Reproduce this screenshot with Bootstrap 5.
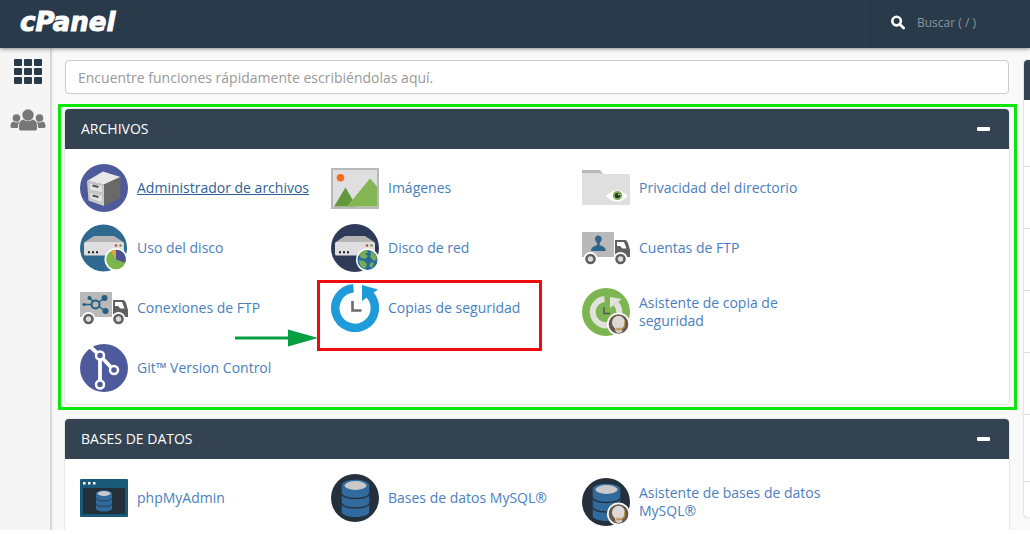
<!DOCTYPE html>
<html lang="es">
<head>
<meta charset="utf-8">
<meta name="viewport" content="width=device-width, initial-scale=1">
<title>cPanel</title>
<link rel="stylesheet" href="https://cdn.jsdelivr.net/npm/bootstrap@5.3.0/dist/css/bootstrap.min.css">
<style>
  body { font-family: "Open Sans", "Noto Sans", sans-serif; font-size: 14px; line-height: 18px; background: #fff; }
  .shell { background: #f9f9f9; border-bottom: 4px solid #fff; }
  .topbar { background: #293a4a; height: 48px; box-shadow: 0 1px 4px rgba(0,0,0,.45); z-index: 3; }
  .brand { font: italic bold 26px/28px "DejaVu Sans", sans-serif; -webkit-text-stroke: 1px #fff; }
  .top-search { width: 160px; border-left: 1px solid #253443; padding-bottom: 3px; }
  .top-search input { font-size: 12px; color: #fff; width: 100px; outline: 0; }
  .top-search input::placeholder { color: #8c959d; opacity: 1; }
  .side { width: 50px; padding: 11px 0 0 6px; background: #f5f5f5; box-shadow: 1px 0 3px rgba(0,0,0,.25); }
  .content { padding: 12px 0 0 15px; }
  .finder { height: 34px; border: 1px solid #ccc; border-radius: 4px; padding: 0 12px; font-size: 14px; }
  .finder::placeholder { color: #999; opacity: 1; }
  .panel-box { margin-top: 15px; border-radius: 4px; background: #fff; box-shadow: 0 0 2px rgba(0,0,0,.25); }
  .panel-title { background: #344352; height: 40px; padding: 0 16px; border-radius: 4px 4px 0 0; font-size: 14px; line-height: 18px; color: #fff; }
  .toggle { width: 20px; height: 20px; }
  .tools { display: grid; grid-template-columns: repeat(auto-fill, 251px); grid-auto-rows: 60px; align-items: start; padding: 15px 0 0 15px; }
  .tool { position: relative; }
  .tool a { display: flex; align-items: center; gap: 9px; min-height: 48px; padding: 10px 10px 10px 0; color: #4a80be; text-decoration: none; }
  .tool a:hover, .tool a.active { color: #2f5f94; text-decoration: underline; }
  .tool svg.ico { width: 48px; height: 48px; flex: none; margin: -10px 0; }
  .frame-green { position: absolute; inset: -5px -8px -6px -7px; border: 3px solid #0be60b; pointer-events: none; }
  .frame-red { position: absolute; left: -14px; top: -4px; width: 225px; height: 71px; border: 3px solid #ed0b0b; pointer-events: none; }
  .arrow { position: absolute; left: -96px; top: 45px; pointer-events: none; }
  .stats { width: 6px; margin: 12px 0 0 15px; }
  .stats-box { border-radius: 4px 0 0 4px; background: #fff; box-shadow: 0 0 2px rgba(0,0,0,.3); overflow: hidden; }
  .stats-title { height: 40px; background: #344352; }
  .stats-row { height: 62px; border-bottom: 1px solid #ddd; }
  .stats-row.tall { height: 67px; }
  .stats-row:last-child { height: 35px; border: 0; }
</style>
</head>
<body>
<svg class="d-none" aria-hidden="true">
  <symbol id="server" viewBox="0 0 48 48">
    <path fill="#b5b5b5" d="M4 18.500 14 12h20l10 6.500z"/>
    <rect x="4" y="18" width="40" height="13.500" rx="1.500" fill="#dedede"/>
    <path fill="#222" d="M8 27.300h2v2H8zm4 0h2v2h-2zm4 0h2v2h-2z"/>
    <circle cx="36" cy="21.500" r="1.200" fill="#c8402e"/><circle cx="40.500" cy="21.500" r="1.200" fill="#5e9a35"/>
  </symbol>
  <symbol id="truck" viewBox="0 0 48 48">
    <path fill="#b9b9b9" d="M0 8h32v25H0z"/>
    <path fill="#606060" d="M33 16h10q2 0 3 3l2 7v7H33z"/>
    <path fill="#fff" d="M35 18h7l2.500 6.500h-4L38 22h-3z"/>
    <circle cx="8.500" cy="35" r="7" fill="#fff"/><circle cx="38.500" cy="35" r="7" fill="#fff"/>
    <circle cx="8.500" cy="35" r="4" fill="#ddd" stroke="#606060" stroke-width="2.600"/>
    <circle cx="38.500" cy="35" r="4" fill="#ddd" stroke="#606060" stroke-width="2.600"/>
  </symbol>
  <symbol id="db" viewBox="0 0 28 38">
    <path fill="#316a9d" d="M0 6v26c0 3 6 5.500 14 5.500S28 35 28 32V6z"/>
    <ellipse cx="14" cy="6" rx="14" ry="6" fill="#316a9d"/>
    <ellipse cx="14" cy="6" rx="11" ry="4.400" fill="#c9c9c9"/>
    <path fill="none" stroke="#24303c" stroke-width="1.400" d="M0 14c0 3 6 5 14 5s14-2 14-5M0 23.500c0 3 6 5 14 5s14-2 14-5"/>
  </symbol>
  <symbol id="agent" viewBox="0 0 24 24">
    <circle cx="12" cy="12" r="12" fill="#fff"/>
    <circle cx="12" cy="12" r="10.300" fill="#66584f"/>
    <ellipse cx="12" cy="10.500" rx="6.800" ry="7" fill="#ddd7d5"/>
    <path fill="#d2cac6" d="M8 15h7l1 5q-4 3-7 0z"/>
    <path fill="none" stroke="#b98a45" stroke-width="1.300" d="M18.500 9v4q0 4-5 4.500h-3"/>
    <path fill="#c29a46" d="M9.500 16.500h4v2h-4z"/>
  </symbol>
</svg>

<div class="shell d-flex flex-column vh-100 overflow-hidden">
  <header class="topbar d-flex align-items-stretch justify-content-between position-relative flex-shrink-0">
    <a href="#" class="brand text-white text-decoration-none align-self-center ps-3 ms-1 pb-1">cPanel</a>
    <form class="top-search d-flex align-items-center" role="search">
      <label for="q" class="d-flex ms-3 ps-1 me-2">
        <svg width="14" height="15" viewBox="0 0 15 15" role="img" aria-label="Buscar"><circle cx="6" cy="6" r="4.600" fill="none" stroke="#fff" stroke-width="2.800"/><path d="m9.500 9.500 4 4" stroke="#fff" stroke-width="3" stroke-linecap="round"/></svg>
      </label>
      <input id="q" type="text" class="bg-transparent border-0 p-0 ms-1" placeholder="Buscar ( / )">
    </form>
  </header>

  <div class="d-flex flex-grow-1">
    <nav class="side flex-shrink-0 d-flex flex-column align-items-center" aria-label="Principal">
      <a href="#" class="d-block" aria-label="Inicio"><svg class="d-block" width="30" height="26" viewBox="0 0 30 26" fill="#293a4a"><g id="r"><rect x="1" width="8" height="7" rx="1"/><rect x="11" width="8" height="7" rx="1"/><rect x="21" width="8" height="7" rx="1"/></g><use href="#r" y="9"/><use href="#r" y="18"/></svg></a>
      <a href="#" class="d-block mt-4" aria-label="Usuarios"><svg class="d-block" width="36" height="22" viewBox="0 0 36 22" fill="#777"><circle cx="18" cy="6" r="5.700"/><path d="M9 20v-4q0-4 4-5.500 5 3.500 10 0 4 1.500 4 5.500v4q0 1.500-2 1.500H11q-2 0-2-1.500z"/><circle cx="6.500" cy="9" r="3.800"/><circle cx="29.500" cy="9" r="3.800"/><path d="M.5 17.500q0-4 2.500-5 3.500 2 6.500 0-1.700 2-1.700 6.500H2q-1.500 0-1.500-1.500zM35.500 17.500q0-4-2.500-5-3.500 2-6.500 0 1.700 2 1.700 6.500H34q1.500 0 1.500-1.500z"/></svg></a>
    </nav>

    <main class="content flex-grow-1">
      <input type="search" class="finder w-100 d-block bg-white" aria-label="Buscar funciones" placeholder="Encuentre funciones rápidamente escribiéndolas aquí.">

      <section class="panel-box position-relative">
        <h2 class="panel-title d-flex align-items-center justify-content-between mb-0 fw-normal">ARCHIVOS
          <button type="button" class="toggle btn p-0 border-0 d-flex align-items-center justify-content-center" aria-label="Contraer"><svg width="13" height="4"><rect width="13" height="4" rx="1" fill="#fff"/></svg></button></h2>
        <div class="tools">
          <div class="tool"><a href="#" class="active">
            <svg class="ico" viewBox="0 0 48 48"><circle cx="24" cy="24" r="24" fill="#4d5a9b"/><path fill="#e8e8e8" d="m7 17 16-9.500L40.500 13 24 20.500z"/><path fill="#cdcdcd" d="m7 17 17 3.500V42L8.500 36.500z"/><path fill="#696969" d="M24 20.500 40.500 13v21L24 42z"/><path fill="#e4e4e4" stroke="#aaa" stroke-width=".6" d="m9 18.800 13.500 3v7L9.500 26zM9.500 28l13 3.200v7.600l-12.500-4z"/><path stroke="#555" stroke-width="2" d="m12.500 21.500 6 1.500m-6 8.500 6 1.500"/></svg>
            <span>Administrador de archivos</span></a></div>
          <div class="tool"><a href="#">
            <svg class="ico" viewBox="0 0 48 48"><rect y="4" width="48" height="41" fill="#b8b8b8"/><rect x="2" y="6" width="44" height="37" fill="#dfdfdf"/><circle cx="9.500" cy="13.700" r="3.800" fill="#f96a1b"/><path fill="#62983c" d="m3 42.500 11.500-19 11 19z"/><path fill="#85b656" d="m16 42.500 23-28 7 8v20z"/></svg>
            <span>Imágenes</span></a></div>
          <div class="tool"><a href="#">
            <svg class="ico" viewBox="0 0 48 48"><path fill="#b8b8b8" d="M0 6h18l3 4v4H0z"/><path fill="#dfdfdf" d="M0 9h18l2 1h28v31H0z"/><path fill="#fff" d="M24 32q11-11 22 0-11 11-22 0z"/><circle cx="35.500" cy="31.500" r="4.600" fill="#7fac4e"/><circle cx="35.500" cy="31.500" r="2.600" fill="#25352a"/><circle cx="36.800" cy="30.500" r=".8" fill="#fff"/></svg>
            <span>Privacidad del directorio</span></a></div>
          <div class="tool"><a href="#">
            <svg class="ico" viewBox="0 0 48 48"><circle cx="23.500" cy="24" r="23.500" fill="#30698f"/><use href="#server" width="48" height="48"/><circle cx="36" cy="35.500" r="11.500" fill="#fff"/><circle cx="36" cy="35.500" r="9.800" fill="#7db54c"/><path fill="#4d5195" d="M36 35.500v-9.800a9.800 9.800 0 0 1 9.200 13z"/><path fill="#e7a13a" d="m36 35.500-5-8.400q2.300-1.400 5-1.400z"/></svg>
            <span>Uso del disco</span></a></div>
          <div class="tool"><a href="#">
            <svg class="ico" viewBox="0 0 48 48"><circle cx="24" cy="24" r="24" fill="#2d3b59"/><use href="#server" width="48" height="48"/><circle cx="36.500" cy="36" r="11.500" fill="#fff"/><circle cx="36.500" cy="36" r="10" fill="#246a9b"/><path fill="#75ad57" d="M28 31q3-5 8-5l1 2-3 2 3 2-3 3-4-1zM39 27q6 2 7 8l-3 2-4-4 1-3zM28 36l5 1 3 3-2 5q-6-2-6-9zM40 38l3 1-2 5-3-2z"/></svg>
            <span>Disco de red</span></a></div>
          <div class="tool"><a href="#">
            <svg class="ico" viewBox="0 0 48 48"><use href="#truck" width="48" height="48"/><path fill="#2c6690" d="M9 27q0-4 4-5l2-1v-2q-2-2-2-4 0-3.500 3.300-3.500t3.400 3.500q0 2-2 4v2l2 1q4 1 4 5z"/></svg>
            <span>Cuentas de FTP</span></a></div>
          <div class="tool"><a href="#">
            <svg class="ico" viewBox="0 0 48 48"><use href="#truck" width="48" height="48"/><path fill="none" stroke="#235f82" stroke-width="1.500" d="M4 20.500h8m7 2 6 4.500m-6-9 5-3.500M10 14l3 3.500"/><circle cx="15.500" cy="20.500" r="4" fill="#b9b9b9" stroke="#235f82" stroke-width="2"/><g fill="#235f82"><circle cx="24.500" cy="14" r="3"/><circle cx="25.500" cy="27" r="3"/><circle cx="9.500" cy="14" r="2"/><circle cx="4" cy="20.500" r="1.600"/></g></svg>
            <span>Conexiones de FTP</span></a></div>
          <div class="tool"><a href="#">
            <svg class="ico" viewBox="0 0 48 48"><path fill="none" stroke="#1f9bd9" stroke-width="8.500" d="M22.500 4.300A19.800 19.800 0 1 0 38.500 10.500"/><path fill="#1f9bd9" d="M31 1 47 5.500 31 17z"/><path fill="none" stroke="#6b6b6b" stroke-width="2.600" d="M21.500 17v9.500h9"/></svg>
            <span>Copias de seguridad</span></a>
            <div class="frame-red"></div>
            <svg class="arrow" width="83" height="18" viewBox="0 0 83 18" fill="#049f40" aria-hidden="true"><path d="M0 7.500h53V.5L83 9l-30 8.500v-7H0z"/></svg>
          </div>
          <div class="tool"><a href="#">
            <svg class="ico" viewBox="0 0 48 48"><circle cx="24" cy="24" r="24" fill="#7cb551"/><path fill="none" stroke="#dfe3dc" stroke-width="6" d="M22.500 11A13.200 13.200 0 1 0 34 15.500"/><path fill="#dfe3dc" d="m28 9 12 2-12 9z"/><path fill="none" stroke="#555" stroke-width="1.500" d="M22 19v6.500h6"/><use href="#agent" x="25" y="24.500" width="23" height="23"/></svg>
            <span>Asistente de copia de seguridad</span></a></div>
          <div class="tool"><a href="#">
            <svg class="ico" viewBox="0 0 48 48"><circle cx="24" cy="24" r="24" fill="#4d5a9b"/><path fill="none" stroke="#fff" stroke-width="3.800" d="m10 2.500 10 9 14 15M20 12v28"/><g fill="#4d5a9b" stroke="#fff" stroke-width="2.500"><circle cx="20" cy="11.500" r="4"/><circle cx="34" cy="26" r="4"/><circle cx="20" cy="40.500" r="4"/></g></svg>
            <span>Git™ Version Control</span></a></div>
        </div>
        <div class="frame-green"></div>
      </section>

      <section class="panel-box">
        <h2 class="panel-title d-flex align-items-center justify-content-between mb-0 fw-normal">BASES DE DATOS
          <button type="button" class="toggle btn p-0 border-0 d-flex align-items-center justify-content-center" aria-label="Contraer"><svg width="13" height="4"><rect width="13" height="4" rx="1" fill="#fff"/></svg></button></h2>
        <div class="tools">
          <div class="tool"><a href="#">
            <svg class="ico" viewBox="0 0 48 48"><rect y="5" width="48" height="38" rx="1" fill="#195978"/><rect x="3" y="14" width="42" height="26" fill="#243038"/><path fill="#fff" d="M3 8h2.500v2.500H3zm5 0h2.500v2.500H8zm5 0h2.500v2.500H13z"/><use href="#db" x="16" y="16" width="16" height="22"/></svg>
            <span>phpMyAdmin</span></a></div>
          <div class="tool"><a href="#">
            <svg class="ico" viewBox="0 0 48 48"><circle cx="24" cy="24" r="24" fill="#24303c"/><use href="#db" x="10.500" y="5.500" width="28" height="38"/></svg>
            <span>Bases de datos MySQL®</span></a></div>
          <div class="tool"><a href="#">
            <svg class="ico" viewBox="0 0 48 48"><circle cx="24" cy="24" r="24" fill="#24303c"/><use href="#db" x="10.500" y="5.500" width="28" height="38"/><use href="#agent" x="25" y="24.500" width="23" height="23"/></svg>
            <span>Asistente de bases de datos MySQL®</span></a></div>
        </div>
      </section>
    </main>

    <aside class="stats flex-shrink-0">
      <div class="stats-box"><div class="stats-title"></div><div class="stats-row tall"></div><div class="stats-row"></div><div class="stats-row"></div><div class="stats-row"></div><div class="stats-row"></div><div class="stats-row tall"></div><div class="stats-row"></div></div>
    </aside>
  </div>
</div>
<script src="https://cdn.jsdelivr.net/npm/bootstrap@5.3.0/dist/js/bootstrap.bundle.min.js"></script>
</body>
</html>
